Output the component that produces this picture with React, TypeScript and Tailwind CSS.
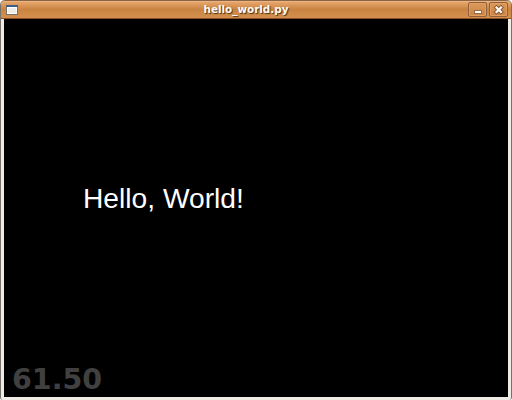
export default function App() {
  return (
    <div className="flex h-[400px] w-[512px] flex-col overflow-hidden rounded-t-[5px] rounded-b-[3px] border-x border-[#77716b] bg-[#efebe5]">
      <header className="-mx-px flex h-[19px] shrink-0 items-center rounded-t-[5px] border border-[#8b6547] border-b-[#8a4f22] bg-linear-to-b from-[#e9aa70] via-[#ca8442] to-[#d4904f] pl-[5px] shadow-[inset_0_1px_0_#edb47d]">
        <svg className="h-[10px] w-[12px] shrink-0" viewBox="0 0 12 10" shapeRendering="crispEdges">
          <rect width="12" height="10" fill="#77716b" />
          <rect x="1" y="1" width="10" height="8" fill="#fff" />
          <rect width="12" height="2" fill="#3f5f8b" />
          <rect x="2" y="3" width="8" height="5" fill="#ecece9" />
        </svg>
        <h1 className="flex-1 pl-[6px] text-center font-['DejaVu_Sans',sans-serif] text-[10.4px] leading-[17px] font-bold text-[#fffaf2] [text-shadow:1px_1px_1px_#50300f]">hello_world.py</h1>
        <div className="flex gap-[2px] pr-[3px]">
          <button aria-label="Minimize" className="h-[15px] w-[19px] rounded-[2px] border border-[#915f39] bg-linear-to-b from-[#dc995b] to-[#ca8343] shadow-[inset_0_0_0_1px_#df9f63]">
            <svg className="block h-[13px] w-[17px]" viewBox="0 0 17 13" shapeRendering="crispEdges">
              <rect x="5" y="7" width="8" height="4" fill="#9a6a42" />
              <rect x="6" y="8" width="6" height="2" fill="#fff" />
            </svg>
          </button>
          <button aria-label="Close" className="h-[15px] w-[19px] rounded-[2px] border border-[#915f39] bg-linear-to-b from-[#dc995b] to-[#ca8343] shadow-[inset_0_0_0_1px_#df9f63]">
            <svg className="block h-[13px] w-[17px]" viewBox="0 0 17 13">
              <path d="m6.5 4.5 4.5 4.5m0-4.5-4.5 4.5" stroke="#8a5328" strokeWidth="4" strokeLinecap="square" />
              <path d="m6.5 4.5 4.5 4.5m0-4.5-4.5 4.5" stroke="#fff" strokeWidth="2.2" strokeLinecap="square" />
            </svg>
          </button>
        </div>
      </header>
      <main className="mx-[3px] flex h-[378px] shrink-0 flex-col bg-black">
        <p className="mt-[161px] pl-[79px] font-['Liberation_Sans',sans-serif] text-[28.2px] leading-[36px] text-white">Hello, World!</p>
        <p className="mt-auto pl-[8px] font-['DejaVu_Sans',sans-serif] text-[28.5px] leading-[35px] font-bold text-[#404040]">61.50</p>
      </main>
    </div>
  );
}
